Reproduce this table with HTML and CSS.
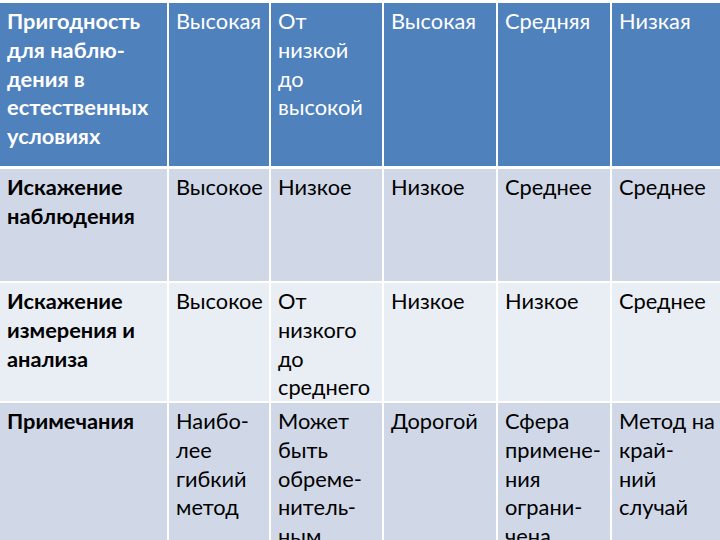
FILE: index.html
```html
<!DOCTYPE html>
<html lang="ru">
<head>
<meta charset="utf-8">
<title>Таблица</title>
<link rel="stylesheet" href="styles.css">
</head>
<body>
<div class="table">
  <div class="cell head first">Пригодность<br>для наблю-<br>дения в<br>естественных<br>условиях</div>
  <div class="cell head">Высокая</div>
  <div class="cell head">От<br>низкой<br>до<br>высокой</div>
  <div class="cell head">Высокая</div>
  <div class="cell head">Средняя</div>
  <div class="cell head">Низкая</div>

  <div class="cell band first">Искажение<br>наблюдения</div>
  <div class="cell band">Высокое</div>
  <div class="cell band">Низкое</div>
  <div class="cell band">Низкое</div>
  <div class="cell band">Среднее</div>
  <div class="cell band">Среднее</div>

  <div class="cell light first">Искажение<br>измерения и<br>анализа</div>
  <div class="cell light">Высокое</div>
  <div class="cell light">От<br>низкого<br>до<br>среднего</div>
  <div class="cell light">Низкое</div>
  <div class="cell light">Низкое</div>
  <div class="cell light">Среднее</div>

  <div class="cell band first">Примечания</div>
  <div class="cell band">Наибо-<br>лее<br>гибкий<br>метод</div>
  <div class="cell band">Может<br>быть<br>обреме-<br>нитель-<br>ным</div>
  <div class="cell band">Дорогой</div>
  <div class="cell band">Сфера<br>примене-<br>ния<br>ограни-<br>чена</div>
  <div class="cell band">Метод на<br>край-<br>ний<br>случай</div>
</div>
</body>
</html>
```
FILE: styles.css
```css
html, body {
  margin: 0;
  padding: 0;
  background: #ffffff;
  width: 720px;
  height: 540px;
  overflow: hidden;
}

.table {
  display: grid;
  grid-template-columns: 167px 100px 111px 112px 112px 108px;
  grid-template-rows: 164px 112px 118px 170px;
  column-gap: 2px;
  row-gap: 2px;
  padding-top: 3px;
  font-family: Lato, "Noto Sans", sans-serif;
  font-size: 21.8px;
  line-height: 28.75px;
}

.cell {
  padding: 4px 2px 0 7px;
  white-space: nowrap;
  overflow: visible;
}

.head {
  background: #4f81bd;
  color: #ffffff;
  margin-bottom: 1px;
}

.band {
  background: #d0d8e8;
  color: #000000;
}

.light {
  background: #e9edf4;
  color: #000000;
}

.first {
  font-weight: 700;
}
```
